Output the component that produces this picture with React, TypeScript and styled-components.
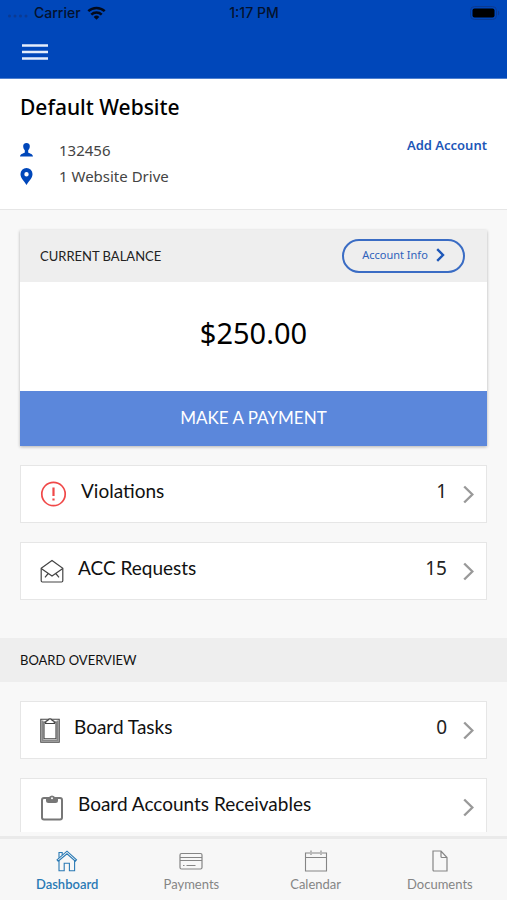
import React from 'react';
import styled, { createGlobalStyle } from 'styled-components';

const GlobalStyle = createGlobalStyle`
  *, *::before, *::after { box-sizing: border-box; }
  body {
    margin: 0;
    background: #f8f8f8;
    color: #111;
    font-family: Lato, "Noto Sans", sans-serif;
  }
  button { font: inherit; color: inherit; cursor: pointer; }
  h1, h2, p, ul { margin: 0; padding: 0; }
  svg { display: block; flex: none; }
`;

const Screen = styled.div`
  display: flex;
  flex-direction: column;
  height: 100vh;
`;

const Header = styled.header`
  flex: none;
  background: #0047ba;
  border-bottom: 1px solid #4f80cf;
`;

const StatusBar = styled.div`
  display: grid;
  grid-template-columns: 1fr auto 1fr;
  align-items: center;
  height: 26px;
  padding: 0 7px 0 8px;
  color: #04122e;
  font: 500 14px/26px Inter, sans-serif;
`;

const StatusLeft = styled.div`
  display: flex;
  align-items: center;
  gap: 6px;
`;

const StatusRight = styled.div`
  display: flex;
  justify-content: flex-end;
`;

const Toolbar = styled.div`
  display: flex;
  align-items: center;
  height: 52px;
  padding: 0 22px;
`;

const IconButton = styled.button`
  padding: 0;
  border: 0;
  background: none;
`;

const Content = styled.main`
  flex: 1;
  min-height: 0;
  overflow-y: auto;
  scrollbar-width: none;
`;

const Account = styled.section`
  padding: 14px 20px 20px;
  background: #fff;
  border-bottom: 1px solid #e6e6e6;
`;

const Title = styled.h1`
  font: 500 21px/28px "Noto Sans", sans-serif;
  color: #000;
`;

const AccountBody = styled.div`
  display: flex;
  align-items: flex-start;
  justify-content: space-between;
  padding-top: 16px;
`;

const Details = styled.ul`
  list-style: none;
`;

const Detail = styled.li`
  display: flex;
  align-items: center;
  gap: 26px;
  height: 26px;
  font: 400 15px/26px "Noto Sans", sans-serif;
  color: #444;
`;

const AddLink = styled.a`
  font: 600 13px/16px "Noto Sans", sans-serif;
  color: #1d57b8;
  text-decoration: none;
`;

const BalanceCard = styled.section`
  margin: 20px 20px 19px;
  background: #fff;
  box-shadow: 0 1px 3px rgba(0, 0, 0, 0.28);
`;

const BalanceHeader = styled.div`
  display: flex;
  align-items: center;
  justify-content: space-between;
  height: 52px;
  padding: 0 22px 0 20px;
  background: #eee;
`;

const CardTitle = styled.h2`
  font-size: 13px;
  font-weight: 400;
  color: #222;
`;

const InfoButton = styled.button`
  display: flex;
  align-items: center;
  justify-content: center;
  gap: 8px;
  width: 123px;
  height: 34px;
  padding: 0 0 2px;
  border: 2px solid #3a6cc4;
  border-radius: 17px;
  background: none;
  color: #2e62bb;
  font: 400 11px/16px "Noto Sans", sans-serif;
`;

const Amount = styled.p`
  padding: 29px 0 36px;
  font: 400 29px/44px "Noto Sans", sans-serif;
  color: #000;
  text-align: center;
`;

const PayButton = styled.button`
  display: block;
  width: 100%;
  height: 55px;
  padding: 0 0 2px;
  border: 0;
  background: #5b87db;
  color: #fff;
  font-size: 17px;
`;

const List = styled.div`
  display: grid;
  gap: 19px;
  padding: 0 20px;
`;

const Row = styled.button`
  display: flex;
  align-items: center;
  width: 100%;
  height: 58px;
  padding: 0 12px 0 19px;
  border: 1px solid #e6e6e6;
  background: #fff;
  text-align: left;
`;

const RowLabel = styled.span`
  flex: 1;
  padding: 0 0 6px 14px;
  font-size: 19px;
  line-height: 24px;
`;

const RowCount = styled.span`
  padding-bottom: 6px;
  margin-right: 16px;
  font: 400 19px/24px "Noto Sans", sans-serif;
  color: #222;
`;

const SectionBar = styled.h2`
  height: 44px;
  margin: 38px 0 19px;
  padding: 0 20px;
  background: #eee;
  font-size: 13px;
  font-weight: 400;
  line-height: 44px;
`;

const TabBar = styled.nav`
  flex: none;
  display: grid;
  grid-template-columns: repeat(4, 1fr);
  height: 64px;
  margin-top: 4px;
  padding: 0 5px;
  border-top: 3px solid #eaeaea;
  background: #f7f7f7;
`;

const Tab = styled.a<{ $active?: boolean }>`
  display: flex;
  flex-direction: column;
  align-items: center;
  padding-top: 11px;
  gap: 3px;
  color: ${(p) => (p.$active ? '#2a7ab5' : '#858585')};
  font-size: 13px;
  font-weight: ${(p) => (p.$active ? 600 : 400)};
  line-height: 18px;
  text-decoration: none;
`;

const Svg = styled.svg`
  fill: none;
  stroke: currentColor;
`;

const RowChevron = () => (
  <Svg width="11" height="19" viewBox="0 0 11 19" color="#999" strokeWidth="2.4">
    <path d="M1.2 1.5 9.400 9.5 1.2 17.5" />
  </Svg>
);

const Alert = () => (
  <Svg width="27" height="26" viewBox="0 0 27 26" color="#f04848" strokeWidth="1.7">
    <circle cx="13.5" cy="13" r="11.7" />
    <path d="M13.5 6.5v8.5M13.5 17.5v2" strokeWidth="2.2" />
  </Svg>
);

const Envelope = () => (
  <Svg width="24" height="24" viewBox="0 0 24 24" color="#444" strokeWidth="1.2">
    <path d="M1.2 9.2 12 1.4l10.8 7.8v12.6a1.2 1.2 0 0 1-1.2 1.2H2.4a1.2 1.2 0 0 1-1.2-1.2Z" />
    <path d="M1.2 9.5 12 17l10.8-7.5M8.2 14.5 5 18.3M15.8 14.5l3.2 3.8" />
  </Svg>
);

const TaskBoard = () => (
  <Svg width="20" height="26" viewBox="0 0 20 26" color="#444" strokeWidth="1.1">
    <path d="M.8 2.300h18.400v22.900H.8Z" />
    <path d="M2.400 3.500v20.200h15.200V3.500" strokeWidth="2" stroke="#888" />
    <path d="M4 5v16.800h12V5Z" fill="#fff" />
    <path d="M5.500 6.500h9c0-1.900-1-2.900-2.400-3.100a2.200 2.200 0 0 0-4.200 0C6.500 3.600 5.500 4.600 5.500 6.500Z" fill="#fff" />
  </Svg>
);

const Clipboard = () => (
  <Svg width="24" height="27" viewBox="0 0 24 27" color="#777" strokeWidth="2">
    <rect x="2" y="4" width="20" height="21.5" rx="2" />
    <path
      d="M6 4h2.700a3.400 3.400 0 0 1 6.600 0H18v2.500A2.500 2.500 0 0 1 15.500 9h-7A2.500 2.500 0 0 1 6 6.500Z"
      fill="#777"
      stroke="none"
    />
    <circle cx="12" cy="4.200" r="1" fill="#fff" stroke="none" />
  </Svg>
);

const Home = () => (
  <Svg width="22" height="22" viewBox="0 0 22 22" strokeWidth="1.1">
    <path d="M3 10.5v10.300h5.200v-7.500h5.200v7.500h5.200V10.500" />
    <path d="M1 9.800 11 1.200l9.500 8.600-1.200 1.400L11 3.800l-8.800 7.400Z" />
    <path d="M3 7.800V2.500h3.200v2.600" />
  </Svg>
);

const Card = () => (
  <Svg width="24" height="22" viewBox="0 0 24 22" strokeWidth="1.2">
    <rect x="1" y="3.5" width="22" height="15.5" rx="1.5" />
    <path d="M1 7.500h22M1 10.500h22M4 15.500h1.500M7.500 15.500h9" />
  </Svg>
);

const Calendar = () => (
  <Svg width="24" height="22" viewBox="0 0 24 22" strokeWidth="1.1">
    <path d="M6 3H1.500v18h21V3H18M8 3h8M1.500 7.500h21M7 .5v4.500M17 .5v4.500" />
  </Svg>
);

const Doc = () => (
  <Svg width="16" height="22" viewBox="0 0 16 22" strokeWidth="1.2">
    <path d="M1 1h8l6 6.500V21H2a1 1 0 0 1-1-1ZM9 1v5.500a1 1 0 0 0 1 1h5" />
  </Svg>
);

const rows = {
  requests: [
    { label: 'Violations', count: 1, Icon: Alert },
    { label: 'ACC Requests', count: 15, Icon: Envelope },
  ],
  board: [
    { label: 'Board Tasks', count: 0, Icon: TaskBoard },
    { label: 'Board Accounts Receivables', count: undefined, Icon: Clipboard },
  ],
};

const tabs = [
  { label: 'Dashboard', Icon: Home },
  { label: 'Payments', Icon: Card },
  { label: 'Calendar', Icon: Calendar },
  { label: 'Documents', Icon: Doc },
];

function Rows({ items }: { items: { label: string; count?: number; Icon: React.FC }[] }) {
  return (
    <List>
      {items.map(({ label, count, Icon }) => (
        <Row key={label} type="button">
          <Icon />
          <RowLabel>{label}</RowLabel>
          {count !== undefined && <RowCount>{count}</RowCount>}
          <RowChevron />
        </Row>
      ))}
    </List>
  );
}

export default function App() {
  return (
    <Screen>
      <GlobalStyle />
      <Header>
        <StatusBar>
          <StatusLeft>
            <svg width="20" height="10" viewBox="0 0 20 10" fill="#0b3a92">
              <circle cx="1.5" cy="8" r="1.5" />
              <circle cx="7" cy="8" r="1.5" />
              <circle cx="12.5" cy="8" r="1.5" />
              <circle cx="18" cy="8" r="1.5" />
            </svg>
            <span>Carrier</span>
            <svg width="19" height="14" viewBox="0 0 19 14" fill="none" stroke="#020a1c" strokeWidth="2.5">
              <path d="M1.300 5.200a11.800 11.800 0 0 1 16.400 0M4.300 8.600a7.400 7.400 0 0 1 10.400 0" />
              <path d="M9.500 13.700 6.700 10.900a4 4 0 0 1 5.600 0Z" fill="#020a1c" stroke="none" />
            </svg>
          </StatusLeft>
          <span>1:17 PM</span>
          <StatusRight>
            <svg width="30" height="14" viewBox="0 0 30 14">
              <rect x=".5" y=".5" width="26" height="13" rx="4" fill="none" stroke="#0b3a92" />
              <rect x="2.5" y="2.5" width="22" height="9" rx="2" fill="#000" />
              <path d="M28 4.500a3 3 0 0 1 0 5Z" fill="#0b3a92" />
            </svg>
          </StatusRight>
        </StatusBar>
        <Toolbar>
          <IconButton type="button" aria-label="Menu">
            <Svg width="26" height="18" viewBox="0 0 26 18" color="#e4edfb" strokeWidth="2.4">
              <path d="M0 2.500h26M0 9h26M0 15.500h26" />
            </Svg>
          </IconButton>
        </Toolbar>
      </Header>

      <Content>
        <Account>
          <Title>Default Website</Title>
          <AccountBody>
            <Details>
              <Detail>
                <svg width="13" height="14" viewBox="0 0 13 14" fill="#0047ba">
                  <path d="M6.500 0C8.700 0 10 1.300 9.800 3.500 9.700 5.300 9 6.300 8.200 7.200v2.300c.3.800 4.500 1 4.800 3.900H0C.3 10.500 4.500 10.300 4.800 9.500V7.200C4 6.300 3.300 5.300 3.200 3.500 3 1.300 4.300 0 6.500 0Z" />
                </svg>
                <span>132456</span>
              </Detail>
              <Detail>
                <svg width="13" height="17" viewBox="0 0 13 17" fill="#0047ba">
                  <path
                    fillRule="evenodd"
                    d="M6.500 0A6 6 0 0 1 12.500 6.200C12.500 10 9 12.500 6.500 17 4 12.500.5 10 .5 6.200A6 6 0 0 1 6.500 0Zm0 4a2.200 2.200 0 1 0 0 4.400 2.200 2.200 0 0 0 0-4.400Z"
                  />
                </svg>
                <span>1 Website Drive</span>
              </Detail>
            </Details>
            <AddLink href="#add-account">Add Account</AddLink>
          </AccountBody>
        </Account>

        <BalanceCard>
          <BalanceHeader>
            <CardTitle>CURRENT BALANCE</CardTitle>
            <InfoButton type="button">
              Account Info
              <Svg width="9" height="14" viewBox="0 0 9 14" color="#1d57b8" strokeWidth="2.4">
                <path d="M1.200 1.200 7 7l-5.800 5.800" />
              </Svg>
            </InfoButton>
          </BalanceHeader>
          <Amount>$250.00</Amount>
          <PayButton type="button">MAKE A PAYMENT</PayButton>
        </BalanceCard>

        <Rows items={rows.requests} />
        <SectionBar>BOARD OVERVIEW</SectionBar>
        <Rows items={rows.board} />
      </Content>

      <TabBar>
        {tabs.map(({ label, Icon }, i) => (
          <Tab key={label} href={`#${label.toLowerCase()}`} $active={i === 0}>
            <Icon />
            {label}
          </Tab>
        ))}
      </TabBar>
    </Screen>
  );
}
